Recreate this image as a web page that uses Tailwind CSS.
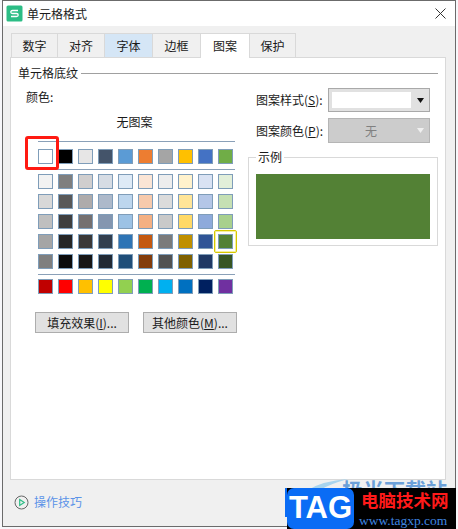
<!DOCTYPE html>
<html lang="zh">
<head>
<meta charset="UTF-8">
<title>单元格格式</title>
<script src="https://cdn.jsdelivr.net/npm/@tailwindcss/browser@4"></script>
</head>
<body class="bg-white">
<div class="relative w-[458px] h-[529px] overflow-hidden bg-[#f7f7fa] font-['Noto_Sans_CJK_SC','Liberation_Sans',sans-serif] text-[12px] leading-[18px] text-[#1a1a1a]">

  <!-- dialog window -->
  <div class="ml-[2px] w-[454px] h-[527px] border border-[#6b6b6b] bg-[#f0f0f0]">
    <!-- title bar -->
    <div class="h-[25px] bg-white flex items-center pl-[3px] pr-[9px]">
      <svg class="w-[17px] h-[17px]" viewBox="0 0 17 17">
        <rect width="16" height="16" x="0.5" y="0.5" rx="1.5" fill="#2cbd85"/>
        <path d="M12 5.5H6.5Q4.8 5.5 4.8 7T6.5 8.5H10.5Q12.2 8.5 12.2 10T10.5 11.5H5" fill="none" stroke="#fff" stroke-width="1.3"/>
      </svg>
      <span class="ml-[4px] text-[12px]">单元格格式</span>
      <svg class="ml-auto w-[11px] h-[11px]" viewBox="0 0 11 11"><path d="M.5.5l10 10M10.5.5l-10 10" stroke="#333" stroke-width="1" fill="none"/></svg>
    </div>

    <!-- tabs -->
    <div class="flex items-end h-[31px] pl-[8px]">
      <div class="w-[47px] h-[24px] flex items-center justify-center border border-b-0 border-[#d9d9d9]">数字</div>
      <div class="w-[48px] h-[24px] -ml-px flex items-center justify-center border border-b-0 border-[#d9d9d9]">对齐</div>
      <div class="w-[49px] h-[24px] -ml-px flex items-center justify-center border border-b-0 border-[#d9d9d9] bg-[#d5e6f6]">字体</div>
      <div class="w-[49px] h-[24px] -ml-px flex items-center justify-center border border-b-0 border-[#d9d9d9]">边框</div>
      <div class="relative z-10 w-[50px] h-[25px] -ml-px -mb-px flex items-center justify-center border border-b-0 border-[#d9d9d9] bg-white">图案</div>
      <div class="w-[47px] h-[24px] -ml-px flex items-center justify-center border border-b-0 border-[#d9d9d9]">保护</div>
    </div>

    <!-- panel -->
    <div class="ml-[7px] w-[436px] h-[423px] border border-[#d9d9d9] bg-white">
      <div class="flex items-center pt-[6px] pl-[7px] pr-[7px] h-[24px]">
        <span>单元格底纹</span>
        <div class="ml-[3px] flex-1 h-px bg-[#a0a0a0]"></div>
      </div>

      <div class="flex">
        <!-- colours -->
        <div class="relative w-[237px] pl-[15px]">
          <div class="mt-[6px] h-[18px]">颜色:</div>
          <div class="mt-[7px] h-[18px] text-center pr-[5px]">无图案</div>

          <div class="ml-[12px] mt-[10px] w-[197px] h-px bg-[#8aa0b8]"></div>
          <div class="ml-[12px] mt-[7px] flex gap-[5px]">
            <div class="w-[15px] h-[15px] border border-[#7f9db9] bg-white"></div>
            <div class="w-[15px] h-[15px] border border-[#7f9db9] bg-black"></div>
            <div class="w-[15px] h-[15px] border border-[#7f9db9] bg-[#e7e6e6]"></div>
            <div class="w-[15px] h-[15px] border border-[#7f9db9] bg-[#44546a]"></div>
            <div class="w-[15px] h-[15px] border border-[#7f9db9] bg-[#5b9bd5]"></div>
            <div class="w-[15px] h-[15px] border border-[#7f9db9] bg-[#ed7d31]"></div>
            <div class="w-[15px] h-[15px] border border-[#7f9db9] bg-[#a5a5a5]"></div>
            <div class="w-[15px] h-[15px] border border-[#7f9db9] bg-[#ffc000]"></div>
            <div class="w-[15px] h-[15px] border border-[#7f9db9] bg-[#4472c4]"></div>
            <div class="w-[15px] h-[15px] border border-[#7f9db9] bg-[#70ad47]"></div>
          </div>
          <div class="ml-[12px] mt-[5px] w-[197px] h-px bg-[#8aa0b8]"></div>

          <div class="ml-[12px] mt-[4px] grid grid-cols-[repeat(10,15px)] gap-[5px]">
            <div class="h-[15px] border border-[#7f9db9] bg-[#f2f2f2]"></div>
            <div class="h-[15px] border border-[#7f9db9] bg-[#7f7f7f]"></div>
            <div class="h-[15px] border border-[#7f9db9] bg-[#d0cece]"></div>
            <div class="h-[15px] border border-[#7f9db9] bg-[#d6dce4]"></div>
            <div class="h-[15px] border border-[#7f9db9] bg-[#deeaf6]"></div>
            <div class="h-[15px] border border-[#7f9db9] bg-[#fbe5d5]"></div>
            <div class="h-[15px] border border-[#7f9db9] bg-[#ededed]"></div>
            <div class="h-[15px] border border-[#7f9db9] bg-[#fff2cc]"></div>
            <div class="h-[15px] border border-[#7f9db9] bg-[#d9e2f3]"></div>
            <div class="h-[15px] border border-[#7f9db9] bg-[#e2efd9]"></div>

            <div class="h-[15px] border border-[#7f9db9] bg-[#d8d8d8]"></div>
            <div class="h-[15px] border border-[#7f9db9] bg-[#595959]"></div>
            <div class="h-[15px] border border-[#7f9db9] bg-[#aeabab]"></div>
            <div class="h-[15px] border border-[#7f9db9] bg-[#adb9ca]"></div>
            <div class="h-[15px] border border-[#7f9db9] bg-[#bdd6ee]"></div>
            <div class="h-[15px] border border-[#7f9db9] bg-[#f7caac]"></div>
            <div class="h-[15px] border border-[#7f9db9] bg-[#dbdbdb]"></div>
            <div class="h-[15px] border border-[#7f9db9] bg-[#ffe598]"></div>
            <div class="h-[15px] border border-[#7f9db9] bg-[#b4c6e7]"></div>
            <div class="h-[15px] border border-[#7f9db9] bg-[#c5e0b3]"></div>

            <div class="h-[15px] border border-[#7f9db9] bg-[#bfbfbf]"></div>
            <div class="h-[15px] border border-[#7f9db9] bg-[#3f3f3f]"></div>
            <div class="h-[15px] border border-[#7f9db9] bg-[#757070]"></div>
            <div class="h-[15px] border border-[#7f9db9] bg-[#8496b0]"></div>
            <div class="h-[15px] border border-[#7f9db9] bg-[#9cc2e5]"></div>
            <div class="h-[15px] border border-[#7f9db9] bg-[#f4b083]"></div>
            <div class="h-[15px] border border-[#7f9db9] bg-[#c9c9c9]"></div>
            <div class="h-[15px] border border-[#7f9db9] bg-[#ffd966]"></div>
            <div class="h-[15px] border border-[#7f9db9] bg-[#8eaadb]"></div>
            <div class="h-[15px] border border-[#7f9db9] bg-[#a8d08d]"></div>

            <div class="h-[15px] border border-[#7f9db9] bg-[#a5a5a5]"></div>
            <div class="h-[15px] border border-[#7f9db9] bg-[#262626]"></div>
            <div class="h-[15px] border border-[#7f9db9] bg-[#3a3838]"></div>
            <div class="h-[15px] border border-[#7f9db9] bg-[#323f4f]"></div>
            <div class="h-[15px] border border-[#7f9db9] bg-[#2e74b5]"></div>
            <div class="h-[15px] border border-[#7f9db9] bg-[#c45911]"></div>
            <div class="h-[15px] border border-[#7f9db9] bg-[#7b7b7b]"></div>
            <div class="h-[15px] border border-[#7f9db9] bg-[#bf8f00]"></div>
            <div class="h-[15px] border border-[#7f9db9] bg-[#2f5496]"></div>
            <div class="relative h-[15px] border border-[#7f9db9] bg-[#538135]">
              <!-- selected swatch -->
              <div class="absolute -left-[5px] -top-[5px] w-[23px] h-[23px] border border-[#d6c800] rounded-[2px] shadow-[inset_0_0_0_1px_#f5f0a0]"></div>
            </div>

            <div class="h-[15px] border border-[#7f9db9] bg-[#7f7f7f]"></div>
            <div class="h-[15px] border border-[#7f9db9] bg-[#0c0c0c]"></div>
            <div class="h-[15px] border border-[#7f9db9] bg-[#171616]"></div>
            <div class="h-[15px] border border-[#7f9db9] bg-[#222a35]"></div>
            <div class="h-[15px] border border-[#7f9db9] bg-[#1f4e79]"></div>
            <div class="h-[15px] border border-[#7f9db9] bg-[#833c0b]"></div>
            <div class="h-[15px] border border-[#7f9db9] bg-[#525252]"></div>
            <div class="h-[15px] border border-[#7f9db9] bg-[#7f6000]"></div>
            <div class="h-[15px] border border-[#7f9db9] bg-[#1f3864]"></div>
            <div class="h-[15px] border border-[#7f9db9] bg-[#375623]"></div>
          </div>

          <div class="ml-[12px] mt-[5px] w-[197px] h-px bg-[#8aa0b8]"></div>
          <div class="ml-[12px] mt-[4px] flex gap-[5px]">
            <div class="w-[15px] h-[15px] border border-[#7f9db9] bg-[#c00000]"></div>
            <div class="w-[15px] h-[15px] border border-[#7f9db9] bg-[#ff0000]"></div>
            <div class="w-[15px] h-[15px] border border-[#7f9db9] bg-[#ffc000]"></div>
            <div class="w-[15px] h-[15px] border border-[#7f9db9] bg-[#ffff00]"></div>
            <div class="w-[15px] h-[15px] border border-[#7f9db9] bg-[#92d050]"></div>
            <div class="w-[15px] h-[15px] border border-[#7f9db9] bg-[#00b050]"></div>
            <div class="w-[15px] h-[15px] border border-[#7f9db9] bg-[#00b0f0]"></div>
            <div class="w-[15px] h-[15px] border border-[#7f9db9] bg-[#0070c0]"></div>
            <div class="w-[15px] h-[15px] border border-[#7f9db9] bg-[#002060]"></div>
            <div class="w-[15px] h-[15px] border border-[#7f9db9] bg-[#7030a0]"></div>
          </div>

          <div class="ml-[9px] mt-[18px] flex gap-[14px]">
            <div class="w-[94px] h-[21px] flex items-center justify-center border border-[#adadad] bg-[#e1e1e1]">填充效果(<u>I</u>)...</div>
            <div class="w-[94px] h-[21px] flex items-center justify-center border border-[#adadad] bg-[#e1e1e1]">其他颜色(<u>M</u>)...</div>
          </div>

          <!-- red annotation -->
          <div class="absolute left-[14px] top-[54px] w-[34px] h-[34px] border-[3px] border-[#ff1a12] rounded-[3px]"></div>
        </div>

        <!-- pattern -->
        <div class="w-[190px] ml-[0px]">
          <div class="mt-[6px] flex items-center pl-[8px]">
            <span class="w-[72px] whitespace-nowrap">图案样式(<u>S</u>):</span>
            <div class="w-[102px] h-[24px] flex items-center border border-[#a9a9a9] bg-[#e1e1e1] pl-[3px]">
              <div class="w-[79px] h-[16px] bg-white"></div>
              <svg class="ml-[6px] w-[7px] h-[5px]" viewBox="0 0 8 5" preserveAspectRatio="none"><path d="M0 0h8L4 5z" fill="#111"/></svg>
            </div>
          </div>
          <div class="mt-[6px] flex items-center pl-[8px]">
            <span class="w-[72px] whitespace-nowrap">图案颜色(<u>P</u>):</span>
            <div class="relative w-[102px] h-[25px] flex items-center justify-center border border-[#b5b5b5] bg-[#cccccc] text-[#808080] pr-[16px]">
              无
              <svg class="absolute right-[5px] top-[9px] w-[7px] h-[5px]" viewBox="0 0 8 5" preserveAspectRatio="none"><path d="M0 0h8L4 5z" fill="#f0f0f0"/></svg>
            </div>
          </div>
          <div class="relative mt-[14px] w-[190px] h-[89px] border border-[#d9d9d9] pt-[16px] px-[7px]">
            <span class="absolute left-[7px] -top-[10px] bg-white px-[2px]">示例</span>
            <div class="w-[174px] h-[65px] bg-[#538135]"></div>
          </div>
        </div>
      </div>
    </div>

    <!-- footer -->
    <div class="h-[44px] flex items-center pl-[11px] text-[#5b93e8]">
      <svg class="w-[15px] h-[15px]" viewBox="0 0 15 15">
        <circle cx="7.5" cy="7.5" r="6.5" fill="none" stroke="#666" stroke-width="1"/>
        <path d="M5.7 4.5l4.5 3-4.5 3z" fill="none" stroke="#2cbd85" stroke-width="1.2"/>
      </svg>
      <span class="ml-[5px]">操作技巧</span>
    </div>
  </div>

  <!-- watermark: only the top of the site name shows above the black label -->
  <div class="absolute left-[342px] top-[476px] h-[12px] overflow-hidden text-[21px] leading-[26px] font-bold text-[#6ca0d8] whitespace-nowrap">极光下载站</div>
  <svg class="absolute left-[300px] top-[478px] w-[50px] h-[12px]" viewBox="0 0 50 12"><path d="M8 12Q22 3 48 1Q30 6 20 12z" fill="#a8d4ee"/></svg>
  <div class="absolute left-[285px] top-[488px] w-[2px] h-[29px] bg-[#0a6cf5]"></div>
  <div class="absolute left-[287px] top-[488px] w-[169px] h-[41px] bg-black flex">
    <div class="w-[67px] h-[41px] rounded-[7px] bg-[#0a6cf5] text-white text-[31px] leading-[40px] font-bold text-center font-['Liberation_Sans',sans-serif]">TAG</div>
    <div class="flex-1 pl-[7px] pt-[2px]">
      <div class="text-[#ff1a1a] text-[17.5px] leading-[20px] font-bold whitespace-nowrap">电脑技术网</div>
      <div class="text-[#3f86e0] text-[13.5px] leading-[16px] mt-[3px] -ml-[2px] font-['Liberation_Serif',serif] whitespace-nowrap">www.tagxp.com</div>
    </div>
  </div>
</div>
</body>
</html>
